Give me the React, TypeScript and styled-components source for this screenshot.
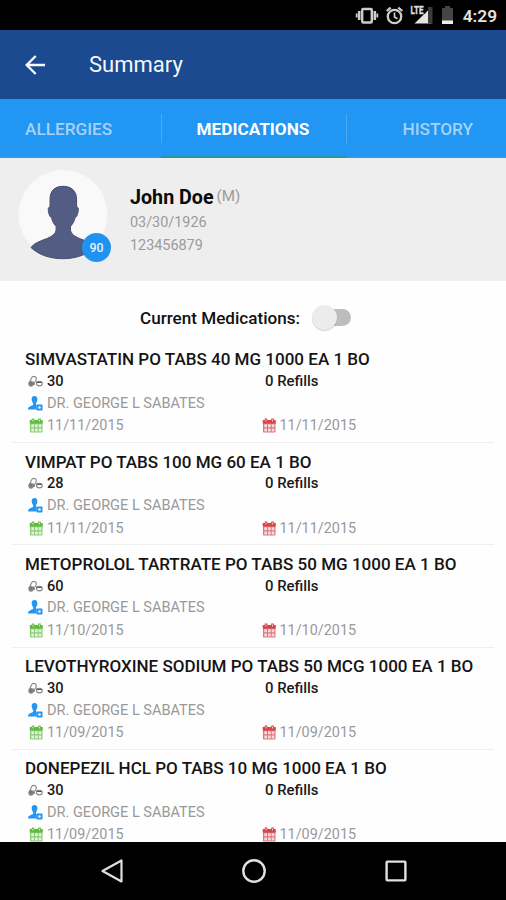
import React from "react";
import styled, { createGlobalStyle } from "styled-components";

const Global = createGlobalStyle`
  * { box-sizing: border-box; }
  body { margin: 0; background: #fff; font-family: Roboto, "Liberation Sans", sans-serif; }
`;

const Screen = styled.div`
  width: 506px;
  height: 900px;
  display: flex;
  flex-direction: column;
  overflow: hidden;
  background: #fefefe;
`;

const StatusBar = styled.div`
  height: 30px;
  flex: none;
  display: flex;
  align-items: center;
  justify-content: flex-end;
  padding-right: 9px;
  background: #000;
`;

const Clock = styled.span`
  margin-left: 8px;
  padding-top: 2px;
  color: #e2e2e2;
  font-size: 17.3px;
  font-weight: 600;
  line-height: 20px;
`;

const AppBar = styled.header`
  height: 69px;
  flex: none;
  display: flex;
  align-items: center;
  padding: 1px 0 0 25px;
  background: #1b4a91;
`;

const Title = styled.h1`
  margin: 0 0 0 43px;
  color: #f6f8fc;
  font-size: 22px;
  font-weight: 400;
  line-height: 28px;
`;

const Tabs = styled.nav`
  height: 59px;
  flex: none;
  display: grid;
  grid-template-columns: 161px 185px 160px;
  background: #2196f3;
`;

const Tab = styled.div<{ $active?: boolean; $indent: number; $divided?: boolean }>`
  display: flex;
  align-items: center;
  padding: 2px 0 0 ${(p) => p.$indent}px;
  color: ${(p) => (p.$active ? "#fff" : "#a5d2fa")};
  border-bottom: 2px solid ${(p) => (p.$active ? "#28949c" : "#2b98f2")};
  background: ${(p) =>
    p.$divided ? "linear-gradient(#4dabf6, #4dabf6) 0 15px / 1px 29px no-repeat" : "none"};
  font-size: 17.2px;
  font-weight: ${(p) => (p.$active ? 700 : 500)};
  white-space: nowrap;
`;

const Patient = styled.section`
  height: 123px;
  flex: none;
  display: flex;
  padding: 12px 0 0 18px;
  background: #eeeeee;
`;

const Avatar = styled.div`
  position: relative;
  width: 90px;
  height: 90px;
`;

const Age = styled.span`
  position: absolute;
  left: 64px;
  top: 63px;
  width: 29px;
  height: 29px;
  border-radius: 50%;
  display: flex;
  align-items: center;
  justify-content: center;
  background: #1f93f1;
  color: #e9f4fd;
  font-size: 12.3px;
  font-weight: 500;
`;

const PatientInfo = styled.div`
  margin-left: 22px;
  padding-top: 14px;
  color: #9b9b9b;
  font-size: 14.4px;
  line-height: 23px;
`;

const NameLine = styled.div`
  display: flex;
  gap: 3px;
  line-height: 27px;
`;

const PatientName = styled.strong`
  color: #0a0a0a;
  font-size: 19.7px;
  font-weight: 700;
`;

const Sex = styled.span`
  font-size: 15.2px;
  line-height: 25px;
`;

const CurrentRow = styled.div`
  height: 60px;
  flex: none;
  display: flex;
  align-items: center;
  padding: 13px 0 0 140px;
  color: #111;
  font-size: 17.1px;
  font-weight: 500;
`;

const Switch = styled.div`
  position: relative;
  width: 33px;
  height: 17px;
  margin-left: 18px;
  border-radius: 9px;
  background: #bdbdbd;
`;

const Thumb = styled.div`
  position: absolute;
  left: -6px;
  top: -4px;
  width: 25px;
  height: 25px;
  border-radius: 50%;
  background: #ececec;
  box-shadow: 0 1px 1px rgba(0, 0, 0, 0.18);
`;

const List = styled.main`
  flex: 1;
  min-height: 0;
  overflow: hidden;
`;

const Item = styled.article`
  height: 102.2px;
  margin: 0 12px;
  padding: 7.4px 0 0 13px;
  border-bottom: 1px solid #eeeeee;
`;

const Drug = styled.h2`
  margin: 0;
  color: #151515;
  font-size: 17.05px;
  font-weight: 500;
  line-height: 22px;
  white-space: nowrap;
`;

const Line = styled.div<{ $height: number }>`
  height: ${(p) => p.$height}px;
  display: grid;
  grid-template-columns: 236px 1fr;
`;

const Cell = styled.div<{ $size: number; $strong?: boolean; $inset?: number }>`
  display: flex;
  align-items: center;
  gap: 4px;
  padding-left: ${(p) => p.$inset ?? 3}px;
  color: ${(p) => (p.$strong ? "#1a1a1a" : "#999")};
  font-size: ${(p) => p.$size}px;
  font-weight: ${(p) => (p.$strong ? 500 : 400)};
  white-space: nowrap;
`;

const NavBar = styled.footer`
  height: 58px;
  flex: none;
  display: grid;
  grid-template-columns: repeat(3, 142px);
  justify-content: center;
  place-items: center;
  padding-left: 1px;
  background: #000;
`;

const StatusIcons = () => (
  <svg width="100" height="30" viewBox="0 0 100 30">
    <g fill="none" stroke="#ccc">
      <rect x="7.2" y="9" width="9.600" height="13.500" rx="1" strokeWidth="2.400" />
      <path d="M4.200 11v9M19.800 11v9" strokeWidth="2.600" />
      <path d="M1.700 13.500v4M22.300 13.500v4" strokeWidth="1.800" />
      <circle cx="39.500" cy="16.500" r="6.700" strokeWidth="2.300" />
      <path d="M39.500 12.500v4.500l3 1.800" strokeWidth="1.700" />
      <path d="M31.700 11l4-3.400M47.300 11l-4-3.400" strokeWidth="2.200" />
    </g>
    <path d="M59.500 23.500 76.500 7v16.500Z" fill="#e4e4e4" />
    <path d="M71 7h6.500v16.500H73V7Z" fill="#3c3c3c" />
    <path d="M57 5h13.500v8.500H57Z" fill="#000" />
    <text x="55.500" y="13.500" fill="#ddd" stroke="#ddd" strokeWidth=".4" fontSize="10.500" fontWeight="700" textLength="13" lengthAdjust="spacingAndGlyphs">LTE</text>
    <path d="M87 8h3V6h5v2h3v15H87Z" fill="#454545" />
    <path d="M87 20.500h11V24H87Z" fill="#eee" />
  </svg>
);

const BackArrow = () => (
  <svg width="21" height="20" viewBox="0 0 21 20" fill="none" stroke="#f8faff" strokeWidth="2.400">
    <path d="M20 10H2M10.700 1 1.700 10l9 9" />
  </svg>
);

const Silhouette = () => (
  <svg width="90" height="90" viewBox="0 0 90 90">
    <circle cx="45" cy="44.500" r="44.500" fill="#f9f9f9" />
    <path
      d="M45 16.300C36 16.300 32 21.500 32 29.500V37c-2.200 0-2 3-1.200 6 .6 2.500 1.300 4.200 2.700 4.300.6 4 2.500 6.700 4.600 9.200v3c0 4.500-5 7.500-10.500 9.500-6 2.400-11.300 4-14.600 8.500C21 85 32 88.700 45 88.700s24-4.200 32.500-11.200c-3.300-4.500-8.600-6.100-14.600-8.500C57.400 67 52.500 64 52.500 59.500v-3c2.100-2.500 4-5.200 4.600-9.200 1.400-.1 2.100-1.800 2.700-4.300.8-3 1-6-1.200-6v-7.500C58.600 21.500 54 16.300 45 16.300Z"
      fill="#535d83"
      stroke="#474e72"
      strokeWidth="1"
    />
  </svg>
);

const PillsIcon = () => (
  <svg width="15" height="14" viewBox="0 0 15 14" fill="none" stroke="#888" strokeWidth="1.100">
    <path d="M1 9.500 3.500 4c1-2.500 5-2 4.800 1L7.500 8" />
    <ellipse cx="3" cy="9.800" rx="2.100" ry="2.300" fill="#777" />
    <ellipse cx="11.400" cy="9.600" rx="2.900" ry="2.300" />
    <path d="M8.500 8.300l5 .2M6 7.500v3.500" stroke="#444" />
  </svg>
);

const DoctorIcon = () => (
  <svg width="15" height="15" viewBox="0 0 15 15">
    <path
      d="M6.500 0C4.300 0 3.500 1.700 3.700 3.600c.1 1.700.8 2.700 1.500 3.600v1.300C4.800 10 0 9.700 0 13.500h13V11L8 8.500V7.200c.7-.9 1.300-1.900 1.400-3.600C9.500 1.700 8.700 0 6.500 0Z"
      fill="#2196f3"
    />
    <rect x="8.500" y="8.500" width="6" height="6" rx="1" fill="#2196f3" stroke="#8cc8fa" strokeWidth=".4" />
    <path d="M11.500 10.200v2.600M10.200 11.500h2.600" stroke="#e4f3ff" strokeWidth="1.500" />
  </svg>
);

const CalendarIcon = ({ tint, grid }: { tint: string; grid: string }) => (
  <svg width="14" height="15" viewBox="0 0 14 15">
    <rect x="1" y="2.500" width="12.500" height="12" rx=".8" fill={grid} />
    <path d="M.7 2h13v3.500H.7Z" fill={tint} />
    <path d="M4 .5v3M10.500 .5v3" stroke={tint} strokeWidth="2.600" />
    <path d="M4 1.700v1.700M10.500 1.700v1.700" stroke="#fff" strokeWidth=".8" />
    <path
      d="M2.300 6.300h2.700v2.900H2.300ZM6 6.300h2.700v2.900H6ZM9.700 6.300h2.700v2.900H9.700ZM2.300 10.500h2.700v2.900H2.300ZM6 10.500h2.700v2.900H6ZM9.700 10.500h2.700v2.900H9.700Z"
      fill="#fff"
      fillOpacity=".75"
    />
  </svg>
);

const medications = [
  { name: "SIMVASTATIN PO TABS 40 MG 1000 EA 1 BO", count: 30, date: "11/11/2015" },
  { name: "VIMPAT PO TABS 100 MG 60 EA 1 BO", count: 28, date: "11/11/2015" },
  { name: "METOPROLOL TARTRATE PO TABS 50 MG 1000 EA 1 BO", count: 60, date: "11/10/2015" },
  { name: "LEVOTHYROXINE SODIUM PO TABS 50 MCG 1000 EA 1 BO", count: 30, date: "11/09/2015" },
  { name: "DONEPEZIL HCL PO TABS 10 MG 1000 EA 1 BO", count: 30, date: "11/09/2015" },
];

export default function App() {
  return (
    <Screen>
      <Global />
      <StatusBar>
        <StatusIcons />
        <Clock>4:29</Clock>
      </StatusBar>
      <AppBar>
        <BackArrow />
        <Title>Summary</Title>
      </AppBar>
      <Tabs>
        <Tab $indent={25}>ALLERGIES</Tab>
        <Tab $indent={35.5} $active $divided>MEDICATIONS</Tab>
        <Tab $indent={56.5} $divided>HISTORY</Tab>
      </Tabs>
      <Patient>
        <Avatar>
          <Silhouette />
          <Age>90</Age>
        </Avatar>
        <PatientInfo>
          <NameLine>
            <PatientName>John Doe</PatientName>
            <Sex>(M)</Sex>
          </NameLine>
          <div>03/30/1926</div>
          <div>123456879</div>
        </PatientInfo>
      </Patient>
      <CurrentRow>
        Current Medications:
        <Switch>
          <Thumb />
        </Switch>
      </CurrentRow>
      <List>
        {medications.map((m) => (
          <Item key={m.name}>
            <Drug>{m.name}</Drug>
            <Line $height={21.600}>
              <Cell $size={14.600} $strong><PillsIcon />{m.count}</Cell>
              <Cell $size={14.900} $strong $inset={4}>0 Refills</Cell>
            </Line>
            <Line $height={23}>
              <Cell $size={14.550}><DoctorIcon />DR. GEORGE L SABATES</Cell>
            </Line>
            <Line $height={22}>
              <Cell $size={14.400} $inset={4}><CalendarIcon tint="#61bd41" grid="#8bcb74" />{m.date}</Cell>
              <Cell $size={14.400} $inset={0.500}><CalendarIcon tint="#d8454b" grid="#e07478" />{m.date}</Cell>
            </Line>
          </Item>
        ))}
      </List>
      <NavBar>
        <svg width="24" height="26" viewBox="0 0 24 26" fill="none" stroke="#e0e0e0" strokeWidth="2.200" strokeLinejoin="round">
          <path d="M21.500 2.500v21L2.500 13Z" />
        </svg>
        <svg width="26" height="26" viewBox="0 0 26 26" fill="none" stroke="#e0e0e0" strokeWidth="2.400">
          <circle cx="13" cy="13" r="10.700" />
        </svg>
        <svg width="24" height="24" viewBox="0 0 24 24" fill="none" stroke="#e0e0e0" strokeWidth="2.400">
          <rect x="2.600" y="2.600" width="18.800" height="18.800" rx=".8" />
        </svg>
      </NavBar>
    </Screen>
  );
}
